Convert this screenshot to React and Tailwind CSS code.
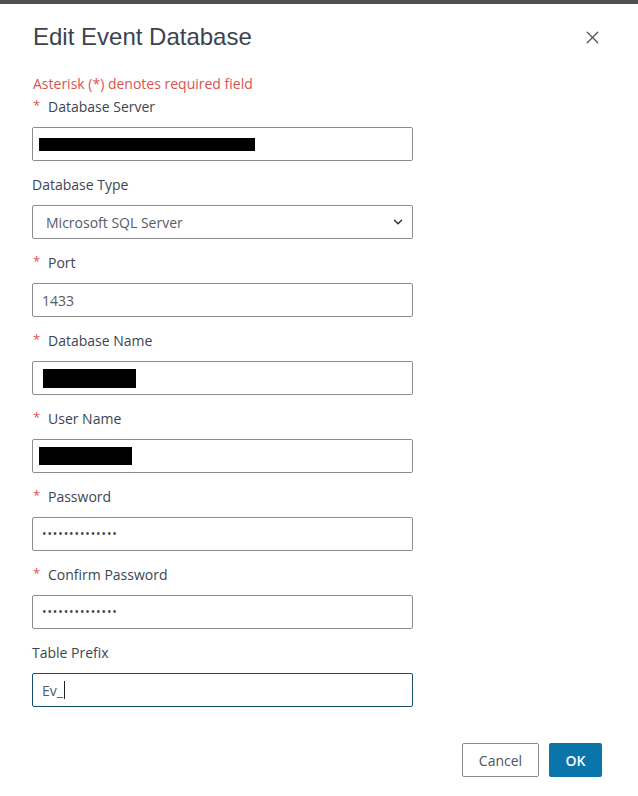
import { ChevronDown, X } from 'lucide-react'

const font = { fontFamily: '"Open Sans", "Noto Sans", sans-serif' }

function Label({ children, required }) {
  return (
    <div className="h-5 flex items-center text-[14px] text-[#3b4652] mb-[11px]">
      {required && <span className="text-[#d9534f] w-[16px] pl-[1px] text-[13px]">*</span>}
      <span>{children}</span>
    </div>
  )
}

function Box({ children, focused }) {
  return (
    <div
      className={`h-[34px] w-[381px] rounded-[2px] border flex items-center px-[9px] text-[14px] text-[#555c63] bg-white ${
        focused ? 'border-[#15506f]' : 'border-[#8c8c8c]'
      }`}
    >
      {children}
    </div>
  )
}

function Redacted({ w, h, ml = 0 }) {
  return <div className="bg-black" style={{ width: w, height: h, marginLeft: ml }} />
}

function Dots() {
  return <span className="tracking-[0.9px] text-[12px] text-[#3b4652]">••••••••••••••</span>
}

export default function App() {
  return (
    <div className="w-[638px] h-[796px] bg-white overflow-hidden" style={font}>
      <div className="h-1 bg-[#505050]" />

      <div className="flex items-center justify-between pl-[33px] pr-[36px] pt-[19px]">
        <h1
          className="text-[24px] text-[#3a4450] leading-[28px]"
          style={{ fontFamily: '"Liberation Sans", Arial, sans-serif' }}
        >
          Edit Event Database
        </h1>
        <X className="w-[21px] h-[21px] text-[#4a5560] -mr-[1px]" strokeWidth={1.5} />
      </div>

      <div className="pl-[32px] pt-[22px]">
        <div className="h-5 flex items-center text-[14px] text-[#d9534f] pl-[1px] mb-[3px]">
          Asterisk (*) denotes required field
        </div>

        <Label required>Database Server</Label>
        <Box>
          <Redacted w={216} h={13} ml={-3} />
        </Box>

        <div className="mt-[13px]">
          <Label>Database Type</Label>
          <Box>
            <span className="flex-1 pl-[4px]">Microsoft SQL Server</span>
            <ChevronDown className="w-[14px] h-[14px] text-[#333] -mr-[2px]" strokeWidth={2.5} />
          </Box>
        </div>

        <div className="mt-[13px]">
          <Label required>Port</Label>
          <Box>1433</Box>
        </div>

        <div className="mt-[13px]">
          <Label required>Database Name</Label>
          <Box>
            <div className="pt-[1px]">
              <Redacted w={93} h={19} ml={1} />
            </div>
          </Box>
        </div>

        <div className="mt-[13px]">
          <Label required>User Name</Label>
          <Box>
            <Redacted w={93} h={18} ml={-3} />
          </Box>
        </div>

        <div className="mt-[13px]">
          <Label required>Password</Label>
          <Box>
            <Dots />
          </Box>
        </div>

        <div className="mt-[13px]">
          <Label required>Confirm Password</Label>
          <Box>
            <Dots />
          </Box>
        </div>

        <div className="mt-[13px]">
          <Label>Table Prefix</Label>
          <Box focused>
            <span>Ev_</span>
            <span className="w-px h-[18px] bg-[#222] ml-[1px]" />
          </Box>
        </div>
      </div>

      <div className="flex justify-end gap-[10px] pr-[36px] pt-[36px]">
        <button className="h-[34px] w-[77px] rounded-[2px] border border-[#8c8c8c] bg-white text-[14px] text-[#4a5560]">
          Cancel
        </button>
        <button className="h-[34px] w-[53px] rounded-[2px] bg-[#0b74a8] text-[14px] font-semibold text-white">
          OK
        </button>
      </div>
    </div>
  )
}
